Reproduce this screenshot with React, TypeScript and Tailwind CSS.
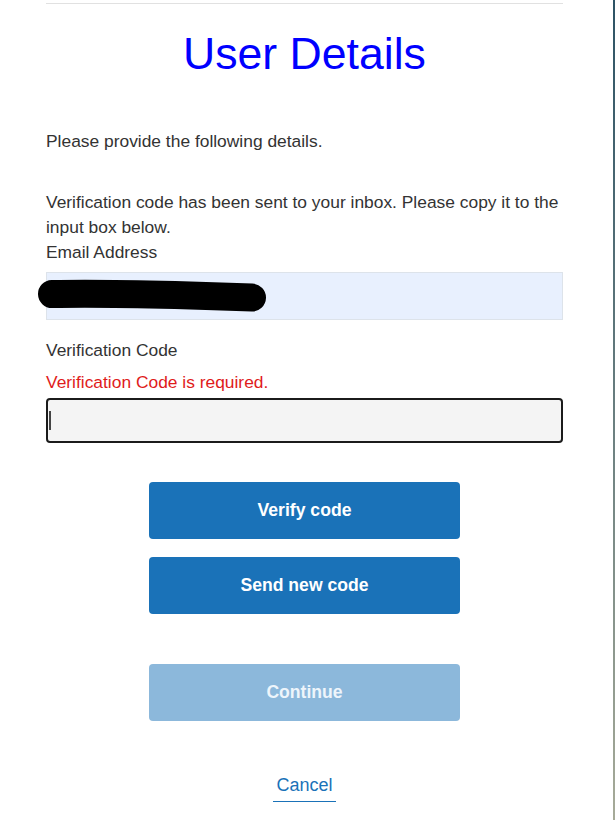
export default function App() {
  const font = { fontFamily: '"Liberation Sans", Arial, sans-serif' };

  return (
    <div className="flex min-h-[820px] w-full bg-white" style={font}>
      <main className="flex-1 pt-[3px]">
        <div className="ml-[46px] w-[517px] border-t border-[#e1e1e1]">
          <h1 className="mt-[24px] text-center text-[44.6px] leading-[52px] text-[#0000ff]">
            User Details
          </h1>

          <div className="text-[17.4px] leading-[25px] text-[#333333]">
            <p className="mt-[49px]">Please provide the following details.</p>
            <p className="mt-[36px]">
              Verification code has been sent to your inbox. Please copy it to the input box below.
            </p>
            <label className="block">Email Address</label>

            <div className="relative mt-[7px] h-[48px] border border-[#dde3ea] bg-[#e8f0fe]">
              {/* redacted value */}
              <svg className="absolute left-[-12px] top-0" width="250" height="48" viewBox="0 0 250 48">
                <path
                  d="M17 21 C60 20 100 21 140 22 C170 23 195 24 217 24.5"
                  stroke="#000"
                  strokeWidth="28"
                  strokeLinecap="round"
                  fill="none"
                />
              </svg>
            </div>

            <label className="mt-[18px] block">Verification Code</label>
            <p className="mt-[7px] text-[#e01b1b]">Verification Code is required.</p>
            <div className="mt-[3px] flex h-[45px] items-center rounded-[4px] border-2 border-[#1b1b1b] bg-[#f4f4f4] pl-[1px]">
              <span className="h-[19px] w-[2px] bg-[#444444]" />
            </div>
          </div>

          <div className="mt-[39px] flex flex-col items-center">
            <button className="h-[57px] w-[311px] rounded-[4px] bg-[#1a72b8] text-[17.6px] font-bold text-white">
              Verify code
            </button>
            <button className="mt-[18px] h-[57px] w-[311px] rounded-[4px] bg-[#1a72b8] text-[17.6px] font-bold text-white">
              Send new code
            </button>
            <button
              disabled
              className="mt-[50px] h-[57px] w-[311px] rounded-[4px] bg-[#8cb8db] text-[17.6px] font-bold text-[#eef5fb]"
            >
              Continue
            </button>
            <a className="mt-[52px] border-b border-[#1a72b8] px-[3px] pb-[3px] text-[18px] leading-[25px] text-[#1a72b8]">
              Cancel
            </a>
          </div>
        </div>
      </main>
      <div className="w-[2px] bg-linear-to-b from-[#2d5365] to-[#a7ab99]" />
    </div>
  );
}
